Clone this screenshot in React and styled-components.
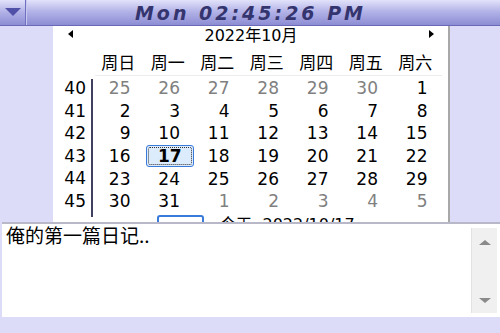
import React from "react";
import styled, { createGlobalStyle } from "styled-components";

const Global = createGlobalStyle`
  html, body { margin: 0; padding: 0; }
  body { background: #dcdcf8; font-family: "DejaVu Sans", "Noto Sans CJK SC", sans-serif; }
`;

const Screen = styled.div`
  width: 500px;
  height: 333px;
  background: #dcdcf8;
  display: flex;
  flex-direction: column;
  overflow: hidden;
`;

const TitleBar = styled.div`
  height: 26px;
  flex: none;
  display: flex;
  background: linear-gradient(#e2e2fa 0%, #b4b4e8 45%, #8c8cd4 100%);
  border-bottom: 1px solid #6a6ab8;
  box-sizing: border-box;
`;

const MenuButton = styled.div`
  width: 25px;
  flex: none;
  display: flex;
  align-items: center;
  justify-content: center;
  border-right: 1px solid #7070c0;
  box-shadow: 1px 0 0 #c8c8f0;
`;

const Clock = styled.div`
  flex: 1;
  display: flex;
  align-items: center;
  justify-content: center;
  padding-right: 25px;
  font-family: "DejaVu Sans", sans-serif;
  font-style: italic;
  font-weight: bold;
  font-size: 19px;
  letter-spacing: 3px;
  color: #34346e;
`;

const Middle = styled.div`
  height: 196px;
  flex: none;
  display: flex;
  overflow: hidden;
`;

const Gutter = styled.div`
  width: ${(p) => p.$w}px;
  flex: none;
`;

const CalendarPanel = styled.div`
  width: 397px;
  flex: none;
  background: #fff;
  border-right: 2px solid #a8a8a8;
  box-sizing: border-box;
  display: flex;
  flex-direction: column;
  font-family: "DejaVu Sans", "Noto Sans CJK SC", sans-serif;
  & > * { flex-shrink: 0; }
`;

const NavRow = styled.div`
  height: 15px;
  display: flex;
  align-items: center;
  justify-content: space-between;
  padding: 0 14px 0 15px;
  font-size: 16px;
  line-height: 15px;
  color: #000;
`;

const NavTitle = styled.span`
  margin-top: 4px;
`;

const Arrow = styled.div`
  width: 0;
  height: 0;
  border-top: 4px solid transparent;
  border-bottom: 4px solid transparent;
  ${(p) => (p.$dir === "left" ? "border-right: 5px solid #000;" : "border-left: 5px solid #000;")}
  margin-top: 1px;
`;

const HeaderRow = styled.div`
  display: grid;
  grid-template-columns: 42px repeat(7, 49.5px);
  height: 35px;
  align-items: end;
`;

const DayName = styled.div`
  text-align: center;
  font-size: 17px;
  line-height: 20px;
  color: #000;
  padding-bottom: 2px;
  padding-right: 3px;
  border-bottom: 1px solid #ececec;
`;

const Blank = styled.div``;

const Body = styled.div`
  display: flex;
  margin-top: 1px;
  height: 137px;
`;

const WeekCol = styled.div`
  width: 40px;
  flex: none;
  border-right: 2px solid #404060;
  padding: 2px 0 4px;
  box-sizing: border-box;
  align-self: flex-start;
  margin-top: 2px;
`;

const WeekNum = styled.div`
  height: 22.6px;
  line-height: 22.6px;
  text-align: right;
  padding-right: 5px;
  font-size: 17px;
  color: #000;
  margin-top: ${(p) => (p.$first ? "-4px" : "0")};
`;

const DayGrid = styled.div`
  display: grid;
  grid-template-columns: repeat(7, 49.5px);
  grid-auto-rows: 22.6px;
  margin-left: 2px;
`;

const Day = styled.div`
  display: flex;
  align-items: center;
  justify-content: flex-end;
  padding-right: 14px;
  font-size: 17px;
  color: ${(p) => (p.$muted ? "#808080" : "#000")};
  position: relative;
`;

const Selected = styled.div`
  position: absolute;
  left: 1px;
  right: 0px;
  top: 0px;
  bottom: 0px;
  border: 1px solid #3a7ad8;
  border-radius: 3px;
  background: #dcecfc;
  display: flex;
  align-items: center;
  justify-content: center;
  font-weight: bold;
  color: #000;
  &::after {
    content: "";
    position: absolute;
    inset: 1px;
    border: 1px dotted #333;
    border-radius: 2px;
  }
`;

const TodayRow = styled.div`
  display: flex;
  align-items: flex-start;
  gap: 16px;
  padding-left: 104px;
  margin-top: 1px;
  font-size: 16px;
`;

const TodayBox = styled.div`
  width: 43px;
  height: 16px;
  border: 2px solid #3a7ad8;
  border-radius: 3px;
`;

const TodayText = styled.div`
  color: #000;
  line-height: 20px;
  margin-top: 0;
`;

const Editor = styled.div`
  height: 95px;
  flex: none;
  margin-left: 2px;
  background: #fff;
  border-top: 2px solid #b8b8c8;
  box-sizing: border-box;
  display: flex;
`;

const EditorText = styled.div`
  flex: 1;
  padding: 1px 4px;
  font-family: "Noto Sans CJK SC", "DejaVu Sans", sans-serif;
  font-size: 19px;
  line-height: 20px;
  color: #000;
`;

const ScrollBar = styled.div`
  width: 26px;
  flex: none;
  margin: 4px 3px 4px 0;
  background: #f0f0f0;
  border-left: 1px solid #e2e2e2;
  display: flex;
  flex-direction: column;
  justify-content: space-between;
  align-items: center;
  padding: 12px 0 10px;
  box-sizing: border-box;
`;

const ScrollArrow = styled.div`
  width: 0;
  height: 0;
  border-left: 6px solid transparent;
  border-right: 6px solid transparent;
  ${(p) => (p.$up ? "border-bottom: 5px solid #8a8a8a;" : "border-top: 5px solid #8a8a8a;")}
`;

const BottomStrip = styled.div`
  flex: 1;
`;

const dayNames = ["周日", "周一", "周二", "周三", "周四", "周五", "周六"];
const weeks = [40, 41, 42, 43, 44, 45];
const days = [
  [25, 26, 27, 28, 29, 30, 1],
  [2, 3, 4, 5, 6, 7, 8],
  [9, 10, 11, 12, 13, 14, 15],
  [16, 17, 18, 19, 20, 21, 22],
  [23, 24, 25, 26, 27, 28, 29],
  [30, 31, 1, 2, 3, 4, 5],
];

export default function App() {
  return (
    <Screen>
      <Global />
      <TitleBar>
        <MenuButton>
          <svg width="16" height="9" viewBox="0 0 16 9">
            <polygon points="0,0 16,0 8,8" fill="#5050a8" />
          </svg>
        </MenuButton>
        <Clock>Mon 02:45:26 PM</Clock>
      </TitleBar>
      <Middle>
        <Gutter $w={53} />
        <CalendarPanel>
          <NavRow>
            <Arrow $dir="left" />
            <NavTitle>2022年10月</NavTitle>
            <Arrow $dir="right" />
          </NavRow>
          <HeaderRow>
            <Blank />
            {dayNames.map((d) => (
              <DayName key={d}>{d}</DayName>
            ))}
          </HeaderRow>
          <Body>
            <WeekCol>
              {weeks.map((w, i) => (
                <WeekNum key={w} $first={i === 0}>{w}</WeekNum>
              ))}
            </WeekCol>
            <DayGrid>
              {days.map((row, ri) =>
                row.map((d, ci) => {
                  const muted = (ri === 0 && d > 20) || (ri === 5 && d < 10);
                  const sel = ri === 3 && d === 17;
                  return (
                    <Day key={`${ri}-${ci}`} $muted={muted}>
                      {sel ? <Selected>{d}</Selected> : d}
                    </Day>
                  );
                })
              )}
            </DayGrid>
          </Body>
          <TodayRow>
            <TodayBox />
            <TodayText>今天: 2022/10/17</TodayText>
          </TodayRow>
        </CalendarPanel>
        <Gutter $w={50} />
      </Middle>
      <Editor>
        <EditorText>俺的第一篇日记..</EditorText>
        <ScrollBar>
          <ScrollArrow $up />
          <ScrollArrow />
        </ScrollBar>
      </Editor>
      <BottomStrip />
    </Screen>
  );
}
